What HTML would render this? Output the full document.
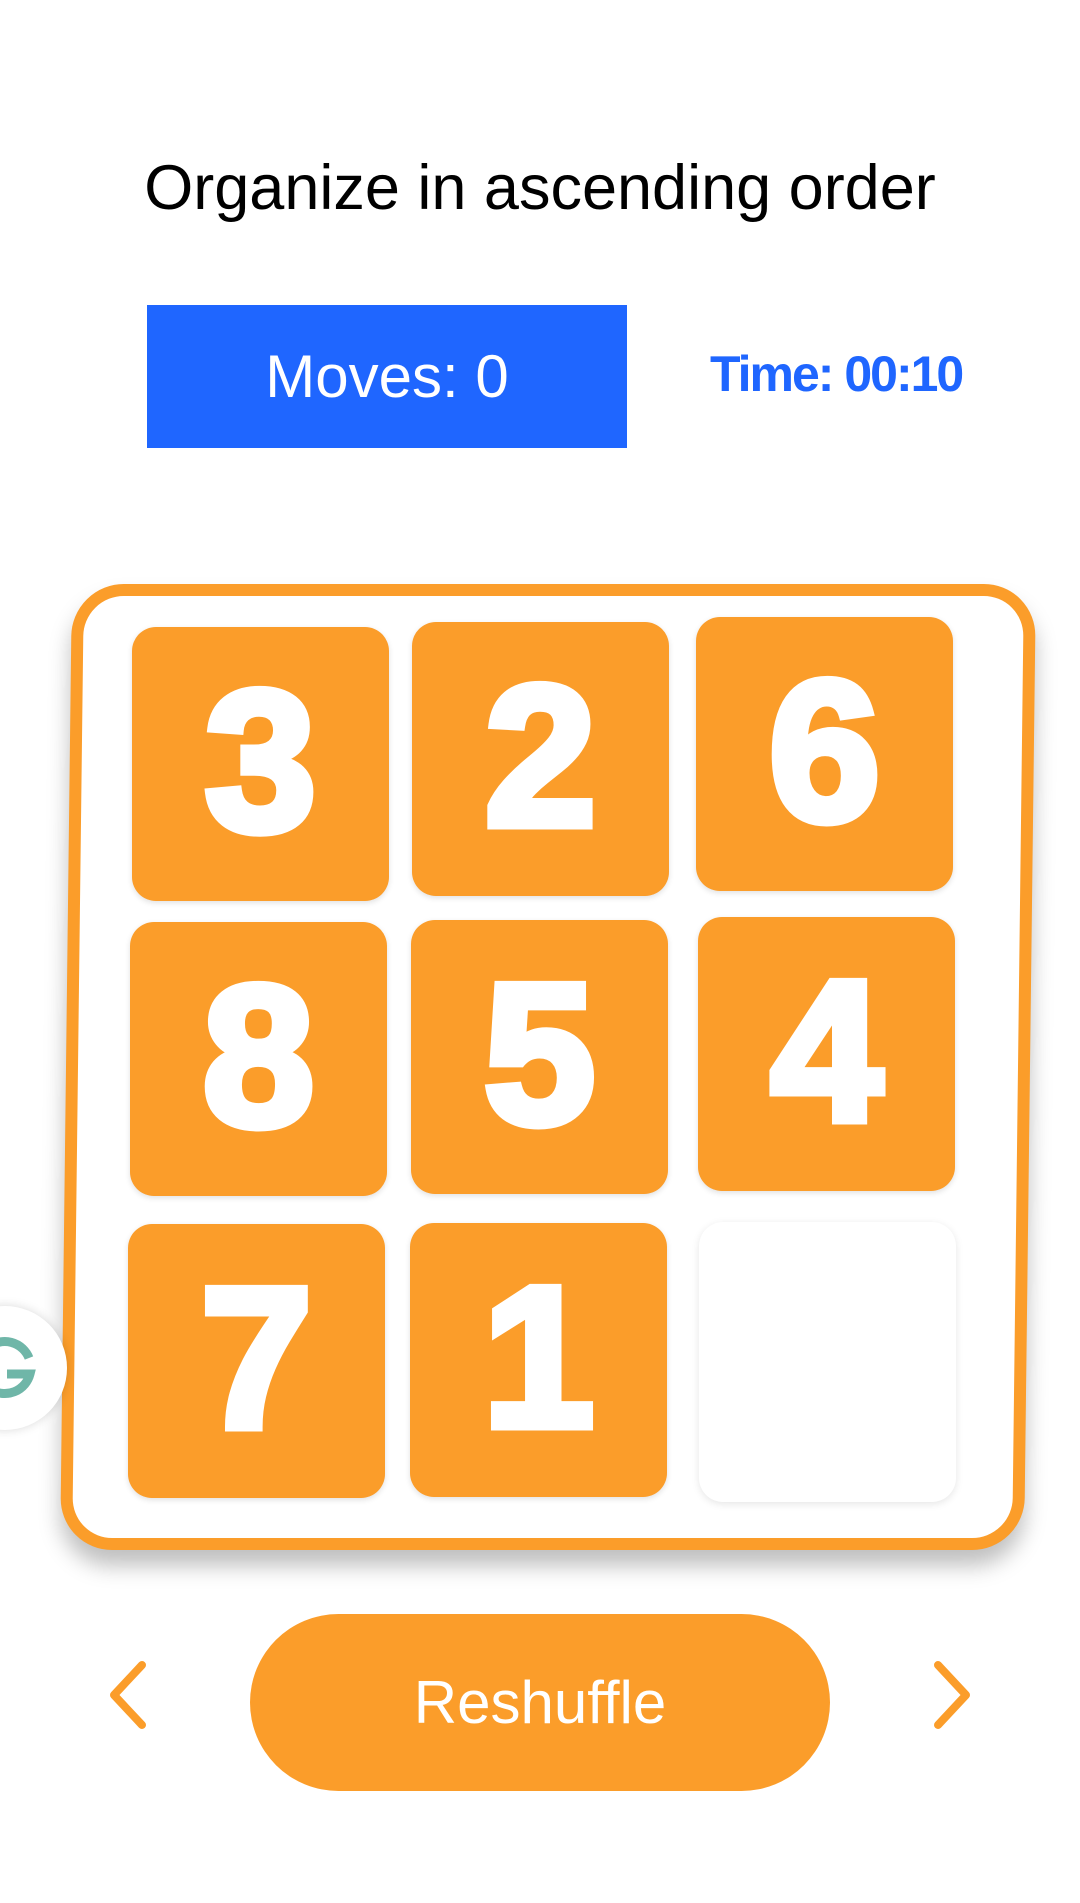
<!DOCTYPE html>
<html><head><style>
body{margin:0;width:1080px;height:1903px;background:#fff;position:relative;overflow:hidden;font-family:"Liberation Sans",sans-serif}
.a{position:absolute}
.title{left:0;width:1080px;top:152px;text-align:center;font-size:63px;color:#000}
.moves{left:147px;top:305px;width:480px;height:143px;background:#1f66ff;color:#fff;font-size:60px;line-height:143px;text-align:center}
.time{left:710px;top:345px;font-size:50px;font-weight:bold;color:#1f66ff;letter-spacing:-2px}
.board{left:66px;top:584px;width:940px;height:942px;border:12px solid #fb9d2a;border-radius:52px;background:#fff;box-shadow:0 16px 22px rgba(0,0,0,.25);transform:skewX(-0.7deg)}
.t{width:257px;height:274px;background:#fb9d2a;border-radius:24px;color:#fff;font-weight:bold;font-size:200px;text-align:center;line-height:270px;box-shadow:0 2px 6px rgba(0,0,0,.12)}
.t span{display:inline-block;-webkit-text-stroke:9px #fff}
.e{background:#fff;box-shadow:0 2px 8px rgba(0,0,0,.1)}
.btn{left:250px;top:1614px;width:580px;height:177px;border-radius:90px;background:#fb9d2a;color:#fff;font-size:60px;line-height:177px;text-align:center}
.g{left:-57px;top:1306px;width:124px;height:124px;border-radius:50%;background:#fff;box-shadow:0 0 10px rgba(0,0,0,.15)}
</style></head><body>
<div class="a title">Organize in ascending order</div>
<div class="a moves">Moves: 0</div>
<div class="a time">Time: 00:10</div>
<div class="a board"></div>
<div class="a t" style="left:132px;top:627px"><span>3</span></div>
<div class="a t" style="left:412px;top:622px"><span>2</span></div>
<div class="a t" style="left:696px;top:617px"><span>6</span></div>
<div class="a t" style="left:130px;top:922px"><span>8</span></div>
<div class="a t" style="left:411px;top:920px"><span>5</span></div>
<div class="a t" style="left:698px;top:917px"><span>4</span></div>
<div class="a t" style="left:128px;top:1224px"><span>7</span></div>
<div class="a t" style="left:410px;top:1223px"><span>1</span></div>
<div class="a t e" style="left:699px;top:1222px;height:280px"></div>
<svg class="a" style="left:100px;top:1655px" width="60" height="80"><path d="M42 10 L14 40 L42 70" fill="none" stroke="#fb9d2a" stroke-width="8" stroke-linecap="round" stroke-linejoin="round"/></svg>
<svg class="a" style="left:920px;top:1655px" width="60" height="80"><path d="M18 10 L46 40 L18 70" fill="none" stroke="#fb9d2a" stroke-width="8" stroke-linecap="round" stroke-linejoin="round"/></svg>
<div class="a btn">Reshuffle</div>
<div class="a g"><svg width="124" height="124"><path d="M86 52 A26 26 0 1 0 87 68 L64 68" fill="none" stroke="#6fb6a8" stroke-width="9"/></svg></div>
</body></html>
